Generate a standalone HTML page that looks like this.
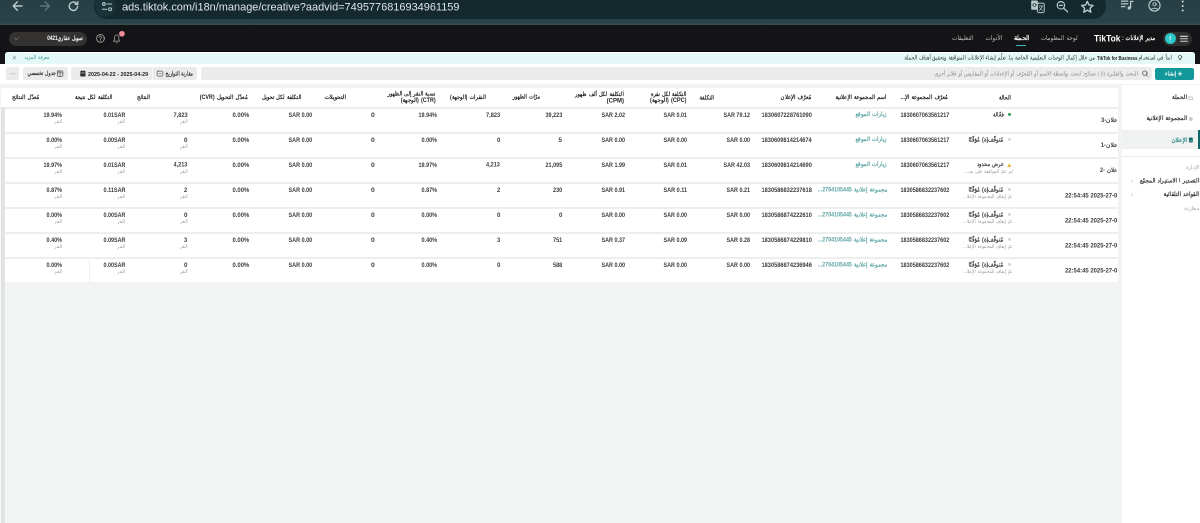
<!DOCTYPE html>
<html lang="ar"><head><meta charset="utf-8"><title>TikTok Ads Manager</title><style>
*{margin:0;padding:0;box-sizing:border-box}
html,body{width:1200px;height:523px;overflow:hidden}
body{position:relative;background:#f2f3f3;font-family:"Liberation Sans",sans-serif}
.abs,.b,.t,.dot{position:absolute;display:block}
.t{white-space:nowrap;line-height:20px;height:20px}
.dot{width:2.8px;height:2.8px;border-radius:50%}
.txt{position:absolute;left:0;top:0;width:2400px;height:1046px;transform:scale(0.5);transform-origin:0 0;will-change:transform}
.hl{position:absolute;left:1px;width:1116.5px;height:1.5px;background:#edefef}
</style></head><body>
<div class="b" style="left:0px;top:0px;width:1200px;height:25px;background:linear-gradient(#273f44 0,#28434a 22px,#2e474a 23.4px,#3f4b4b 24px,#3f4b4b 100%);"></div>
<div class="b" style="left:94px;top:-7px;width:1012px;height:26px;background:#14292e;border-radius:13px"></div>
<div class="b" style="left:95.2px;top:-3.6px;width:20.6px;height:20.6px;background:#1b3439;border-radius:50%"></div>
<div class="b" style="left:0px;top:25px;width:1200px;height:39px;background:linear-gradient(#0e1414 0,#101616 1.5px,#141416 3.5px,#141416 100%);"></div>
<div class="b" style="left:0px;top:51px;width:1200px;height:1px;background:#050505;"></div>
<div class="b" style="left:9.3px;top:31.8px;width:78.2px;height:14px;background:#343332;border-radius:7px"></div>
<div class="b" style="left:1163px;top:32px;width:28.5px;height:13.6px;background:#2f2f2f;border-radius:7px"></div>
<div class="b" style="left:1164.6px;top:33.2px;width:11.2px;height:11.2px;background:#2cc5c8;border-radius:50%"></div>
<div class="b" style="left:1016px;top:45.1px;width:10px;height:1.1px;background:#3fb8b8;"></div>
<div class="b" style="left:0px;top:64px;width:1200px;height:19.8px;background:#fff;"></div>
<div class="b" style="left:5px;top:52px;width:1190px;height:12.3px;background:#e4f8f7;border-radius:3px 3px 0 0;border-top:1.6px solid #fbffff"></div>
<div class="b" style="left:6.3px;top:67.4px;width:12.6px;height:12.6px;background:#ebebeb;border-radius:2px"></div>
<div class="b" style="left:22.8px;top:67.4px;width:45.2px;height:12.6px;background:#ebebeb;border-radius:2px"></div>
<div class="b" style="left:71.4px;top:67.4px;width:126px;height:12.6px;background:#ebebeb;border-radius:2px"></div>
<div class="b" style="left:152.1px;top:67.4px;width:0.9px;height:12.6px;background:#f7f7f7;"></div>
<div class="b" style="left:200.8px;top:67.4px;width:951px;height:12.6px;background:#ebebeb;border-radius:2px"></div>
<div class="b" style="left:1155px;top:67.6px;width:38.8px;height:12.6px;background:#12979a;border-radius:2px"></div>
<div class="b" style="left:1122px;top:84.7px;width:78px;height:440px;background:#fff;"></div>
<div class="b" style="left:1122px;top:130.2px;width:78px;height:19.2px;background:#f0f1f1;"></div>
<div class="b" style="left:1198.2px;top:130.2px;width:1.8px;height:19.2px;background:#0f6666;"></div>
<div class="b" style="left:1122px;top:155.6px;width:78px;height:0.9px;background:#ececec;"></div>
<div class="b" style="left:1px;top:87.8px;width:1116.5px;height:194.4px;background:#fff;border-radius:3px 1px 0 0"></div>
<div class="hl" style="top:107px"></div>
<div class="hl" style="top:132px"></div>
<div class="hl" style="top:157px"></div>
<div class="hl" style="top:182px"></div>
<div class="hl" style="top:207px"></div>
<div class="hl" style="top:232px"></div>
<div class="hl" style="top:257px"></div>
<div class="b" style="left:88.6px;top:258.5px;width:0.7px;height:23.7px;background:#f0f0f0;"></div>
<div class="b" style="left:0px;top:107.5px;width:1.3px;height:420px;background:#f6f7f7;"></div>
<div class="b" style="left:1.3px;top:107.4px;width:3.5px;height:420px;background:#e2e3e3;"></div>
<div class="b" style="left:4.8px;top:282.2px;width:2.2px;height:245px;background:#f5f6f6;"></div>
<svg class="abs" style="left:0;top:0" width="1200" height="25" viewBox="0 0 1200 25" fill="none" stroke-linecap="round" stroke-linejoin="round">
<g stroke="#b9cccc" stroke-width="1.4">
<path d="M22 6H13.4M17.4 1.8L13.2 6l4.2 4.2"/>
<path d="M77.6 6.3a4.2 4.2 0 1 1-1.3-3.1M77.8 1.6v2.6h-2.6"/>
</g>
<g stroke="#5a7679" stroke-width="1.4"><path d="M40.6 6h8.6M45.2 1.8L49.4 6l-4.2 4.2"/></g>
<g stroke="#b9cccc" stroke-width="1.1">
<circle cx="103.9" cy="4" r="1.4"/><path d="M107 4h4.6M102.4 9.2h4.4"/><circle cx="110.1" cy="9.2" r="1.5"/>
</g>
<g>
<rect x="1031.2" y="0.4" width="6.6" height="9.4" rx="0.8" fill="#bccccc"/>
<rect x="1037.4" y="3.2" width="6.8" height="9.4" rx="0.8" stroke="#bccccc" stroke-width="1"/>
<circle cx="1034.4" cy="5" r="1.6" stroke="#2b4549" stroke-width="0.9"/>
<path d="M1039 6h3.6M1039.4 10.6l3-4.4M1039.6 7.6l2.8 3" stroke="#bccccc" stroke-width="0.8"/>
</g>
<g stroke="#b9cccc" stroke-width="1.2">
<circle cx="1060.9" cy="5.3" r="3.7"/><path d="M1063.7 8.2l3.9 3.6M1059.3 5.3h3.2"/>
<path d="M1087.3 1.3l1.7 3.7 4 .4-3 2.8.8 4-3.5-2.1-3.5 2.1.8-4-3-2.8 4-.4z" stroke-width="1.4"/>
<path d="M1121.4 1.2h6.4M1121.4 3.9h6.4M1121.4 6.6h3.6"/>
<path d="M1130.6 1.4v6.2M1130.6 1.4h2.4" stroke-width="1.3"/>
<circle cx="1154.5" cy="5.5" r="5.6"/>
<circle cx="1154.5" cy="4.2" r="1.7" stroke-width="1"/>
<path d="M1150.8 9.4c1-1.6 6.4-1.6 7.4 0" stroke-width="1"/>
</g>
<circle cx="1129.2" cy="8" r="1.7" fill="#b9cccc"/>
<g fill="#d3e0e0"><circle cx="1182.7" cy="1.6" r="1"/><circle cx="1182.7" cy="6" r="1"/><circle cx="1182.7" cy="10.4" r="1"/></g>
</svg>
<svg class="abs" style="left:0;top:25px" width="1200" height="60" viewBox="0 25 1200 60" fill="none" stroke-linecap="round" stroke-linejoin="round">
<path d="M14.4 37.9l1.9 1.9 1.9-1.9" stroke="#8a8a8a" stroke-width="0.8"/>
<circle cx="100.4" cy="38.4" r="3.9" stroke="#c2c2c2" stroke-width="0.8"/>
<path d="M99.2 37.3c0-1.6 2.4-1.6 2.4 0 0 .9-1.2 1-1.2 2.1" stroke="#c2c2c2" stroke-width="0.8"/><circle cx="100.4" cy="40.7" r="0.45" fill="#c2c2c2"/>
<path d="M113.6 41.2h6.2l-.9-1.3v-2.7a2.2 2.2 0 0 0-4.4 0v2.7z" stroke="#a4a4a4" stroke-width="0.8"/><path d="M115.9 42.6c.4.6 1.2.6 1.6 0" stroke="#a4a4a4" stroke-width="0.8"/>
<circle cx="121.9" cy="33.8" r="2.8" fill="#f28c98"/>
<path d="M1180.6 36.4h6.8M1180.6 38.8h6.8M1180.6 41.2h6.8" stroke="#d0d0d0" stroke-width="1.1"/>
<path d="M1170.2 36.2v3.2" stroke="#fff" stroke-width="0.9"/><circle cx="1170.2" cy="41.2" r="0.5" fill="#fff"/>
<path d="M12.9 56.3l3 3M15.9 56.3l-3 3" stroke="#666" stroke-width="0.6"/>
<circle cx="1180" cy="57" r="1.7" stroke="#555" stroke-width="0.7"/><path d="M1179.2 59.6h1.6" stroke="#555" stroke-width="0.7"/>
<g fill="#9a9a9a"><circle cx="10.8" cy="73.7" r="0.55"/><circle cx="12.6" cy="73.7" r="0.55"/><circle cx="14.4" cy="73.7" r="0.55"/></g>
<rect x="57.4" y="71" width="5.4" height="5.4" rx="0.6" stroke="#444" stroke-width="0.7"/><path d="M60.1 71v5.4M57.4 72.8h5.4" stroke="#444" stroke-width="0.6"/>
<rect x="80.2" y="71" width="5.4" height="5.6" rx="0.8" fill="#333"/><path d="M80.6 72.9h4.6" stroke="#ebebeb" stroke-width="0.5"/><path d="M81.6 70.4v1.2M84.2 70.4v1.2" stroke="#333" stroke-width="0.7"/>
<rect x="157.2" y="71.2" width="5.6" height="5" rx="0.8" stroke="#555" stroke-width="0.7"/><path d="M159 73.7h2.2" stroke="#555" stroke-width="0.6"/>
<circle cx="1144.8" cy="73.2" r="2.3" stroke="#555" stroke-width="0.8"/><path d="M1146.5 75l1.5 1.5" stroke="#555" stroke-width="0.8"/>
<path d="M1178.2 73.8h3.6M1180 72v3.6" stroke="#fff" stroke-width="0.9"/>
</svg>
<svg class="abs" style="left:1122px;top:85px" width="78" height="130" viewBox="1122 85 78 130" fill="none" stroke-linecap="round" stroke-linejoin="round">
<path d="M1189.2 96.6h1.4l.5.6h1.5v2.4h-3.4z" stroke="#b5b5b5" stroke-width="0.7"/>
<rect x="1189" y="117.2" width="3.6" height="3.6" rx="0.6" fill="#c9c9c9"/>
<rect x="1188.9" y="137.4" width="3.9" height="5" rx="0.9" fill="#156d6d"/><path d="M1190 140.9h1.7" stroke="#e8f3f3" stroke-width="0.5"/>
<path d="M1132.6 179.8l-1.2 1.2 1.2 1.2M1132.6 193.3l-1.2 1.2 1.2 1.2" stroke="#b0b0b0" stroke-width="0.6"/>
</svg>

<i class="dot" style="left:1008px;top:113.4px;background:#2e9e4f"></i>
<i class="dot" style="left:1008px;top:138.4px;background:#d4d4d4"></i>
<svg class="abs" style="left:1007.2px;top:162.5px" width="4.6" height="4.4" viewBox="0 0 10 9"><path d="M5 0 L10 9 L0 9 Z" fill="#e9b93a"/></svg>
<i class="dot" style="left:1008px;top:188.4px;background:#d4d4d4"></i>
<i class="dot" style="left:1008px;top:213.4px;background:#d4d4d4"></i>
<i class="dot" style="left:1008px;top:238.4px;background:#d4d4d4"></i>
<i class="dot" style="left:1008px;top:263.4px;background:#d4d4d4"></i>
<div class="txt">
<span class="t" style="top:2.6px;font-size:22.8px;color:#dfe7e7;left:244.0px;direction:ltr;transform-origin:0 50%;transform:scaleX(0.961);">ads.tiktok.com/i18n/manage/creative?aadvid=7495776816934961159</span>
<span class="t" style="top:65.7px;font-size:12px;color:#fff;font-weight:700;right:2234.2px;direction:rtl;word-spacing:.12em;transform-origin:100% 50%;transform:scaleX(0.776);">تمويل عقاري0421</span>
<span class="t" style="top:66.1px;font-size:13.2px;color:#bdbdbd;right:453.0px;direction:rtl;word-spacing:.12em;transform-origin:100% 50%;transform:scaleX(0.872);">التعليقات</span>
<span class="t" style="top:66.4px;font-size:13.2px;color:#bdbdbd;right:395.0px;direction:rtl;word-spacing:.12em;transform-origin:100% 50%;transform:scaleX(0.876);">الأدوات</span>
<span class="t" style="top:66.3px;font-size:13.2px;color:#fff;font-weight:700;right:341.5px;direction:rtl;word-spacing:.12em;transform-origin:100% 50%;transform:scaleX(0.896);">الحملة</span>
<span class="t" style="top:65.5px;font-size:13.2px;color:#bdbdbd;right:245.0px;direction:rtl;word-spacing:.12em;transform-origin:100% 50%;transform:scaleX(0.842);">لوحة المعلومات</span>
<span class="t" style="top:67.1px;font-size:18px;color:#fff;font-weight:700;left:2188.0px;direction:ltr;transform-origin:0 50%;transform:scaleX(0.940);">TikTok</span>
<span class="t" style="top:66.1px;font-size:12.8px;color:#fff;font-weight:700;right:90.0px;direction:rtl;word-spacing:.12em;transform-origin:100% 50%;transform:scaleX(0.765);">مدير الإعلانات :</span>
<span class="t" style="top:104.6px;font-size:11.6px;color:#2b2b2b;right:56.4px;direction:rtl;word-spacing:.12em;transform-origin:100% 50%;transform:scaleX(0.819);">ابدأ في استخدام</span>
<span class="t" style="top:105.6px;font-size:10.8px;color:#222;font-weight:700;left:2193.6px;direction:ltr;transform-origin:0 50%;transform:scaleX(0.792);">TikTok for Business</span>
<span class="t" style="top:104.8px;font-size:11.6px;color:#2b2b2b;right:210.2px;direction:rtl;word-spacing:.12em;transform-origin:100% 50%;transform:scaleX(0.772);">من خلال إكمال الوحدات التعليمية الخاصة بنا. تعلّم إنشاء الإعلانات المتوافقة وتحقيق أهداف الحملة.</span>
<span class="t" style="top:104.4px;font-size:11.2px;color:#3f9c9c;right:2301.0px;direction:rtl;word-spacing:.12em;transform-origin:100% 50%;transform:scaleX(0.854);">معرفة المزيد</span>
<span class="t" style="top:136.2px;font-size:11.6px;color:#333;font-weight:700;right:2288.4px;direction:rtl;word-spacing:.12em;transform-origin:100% 50%;transform:scaleX(0.772);">جدول تخصصي</span>
<span class="t" style="top:138.1px;font-size:11.6px;color:#222;font-weight:700;left:176.0px;direction:ltr;transform-origin:0 50%;transform:scaleX(0.933);">2025-04-22 - 2025-04-29</span>
<span class="t" style="top:136.7px;font-size:11.6px;color:#333;font-weight:700;right:2014.0px;direction:rtl;word-spacing:.12em;transform-origin:100% 50%;transform:scaleX(0.748);">مقارنة التواريخ</span>
<span class="t" style="top:137.0px;font-size:11.6px;color:#8a8a8a;right:124.0px;direction:rtl;word-spacing:.12em;transform-origin:100% 50%;transform:scaleX(0.819);">البحث والفلترة (/) | نصائح: ابحث بواسطة الاسم أو المُعرّف أو الإعدادات أو المقاييس أو فلاتر أخرى</span>
<span class="t" style="top:137.3px;font-size:11.6px;color:#fff;font-weight:700;right:48.0px;direction:rtl;word-spacing:.12em;transform-origin:100% 50%;transform:scaleX(0.830);">إنشاء</span>
<span class="t" style="top:184.4px;font-size:12.4px;color:#333;font-weight:700;right:26.0px;direction:rtl;word-spacing:.12em;transform-origin:100% 50%;transform:scaleX(0.935);">الحملة</span>
<span class="t" style="top:226.4px;font-size:12.4px;color:#333;font-weight:700;right:26.0px;direction:rtl;word-spacing:.12em;transform-origin:100% 50%;transform:scaleX(0.899);">المجموعة الإعلانية</span>
<span class="t" style="top:269.7px;font-size:12.4px;color:#2a8585;font-weight:700;right:26.0px;direction:rtl;word-spacing:.12em;transform-origin:100% 50%;transform:scaleX(0.938);">الإعلان</span>
<span class="t" style="top:323.6px;font-size:11.2px;color:#a9a9a9;right:1.0px;direction:rtl;word-spacing:.12em;transform-origin:100% 50%;transform:scaleX(0.981);">الإدارة</span>
<span class="t" style="top:350.6px;font-size:12.4px;color:#333;font-weight:700;right:2.0px;direction:rtl;word-spacing:.12em;transform-origin:100% 50%;transform:scaleX(0.890);">التصدير \ الاستيراد المجمّع</span>
<span class="t" style="top:378.1px;font-size:12.4px;color:#333;font-weight:700;right:2.0px;direction:rtl;word-spacing:.12em;transform-origin:100% 50%;transform:scaleX(0.909);">القواعد التلقائية</span>
<span class="t" style="top:405.9px;font-size:11.2px;color:#a9a9a9;right:1.0px;direction:rtl;word-spacing:.12em;transform-origin:100% 50%;transform:scaleX(1.055);">مقارنة</span>
<span class="t" style="top:184.8px;font-size:12px;color:#1f1f1f;font-weight:700;right:378.4px;direction:rtl;word-spacing:.12em;transform-origin:100% 50%;transform:scaleX(0.843);">الحالة</span>
<span class="t" style="top:183.7px;font-size:12px;color:#1f1f1f;font-weight:700;right:504.0px;direction:rtl;word-spacing:.12em;transform-origin:100% 50%;transform:scaleX(0.870);">مُعرّف المجموعة الإ...</span>
<span class="t" style="top:183.8px;font-size:12px;color:#1f1f1f;font-weight:700;right:627.5px;direction:rtl;word-spacing:.12em;transform-origin:100% 50%;transform:scaleX(0.881);">اسم المجموعة الإعلانية</span>
<span class="t" style="top:184.0px;font-size:12px;color:#1f1f1f;font-weight:700;right:777.5px;direction:rtl;word-spacing:.12em;transform-origin:100% 50%;transform:scaleX(0.891);">مُعرّف الإعلان</span>
<span class="t" style="top:184.6px;font-size:12px;color:#1f1f1f;font-weight:700;right:971.6px;direction:rtl;word-spacing:.12em;transform-origin:100% 50%;transform:scaleX(0.861);">التكلفة</span>
<span class="t" style="top:178.0px;font-size:12px;color:#1f1f1f;font-weight:700;right:1027.0px;direction:rtl;word-spacing:.12em;transform-origin:100% 50%;transform:scaleX(0.828);">التكلفة لكل نقرة</span>
<span class="t" style="top:189.7px;font-size:12px;color:#1f1f1f;font-weight:700;right:1027.0px;direction:rtl;word-spacing:.12em;transform-origin:100% 50%;transform:scaleX(0.935);">(CPC) (الوجهة)</span>
<span class="t" style="top:177.8px;font-size:12px;color:#1f1f1f;font-weight:700;right:1152.5px;direction:rtl;word-spacing:.12em;transform-origin:100% 50%;transform:scaleX(0.841);">التكلفة لكل ألف ظهور</span>
<span class="t" style="top:190.7px;font-size:12px;color:#1f1f1f;font-weight:700;right:1152.0px;direction:rtl;word-spacing:.12em;transform-origin:100% 50%;">(CPM)</span>
<span class="t" style="top:183.3px;font-size:12px;color:#1f1f1f;font-weight:700;right:1320.0px;direction:rtl;word-spacing:.12em;transform-origin:100% 50%;transform:scaleX(0.824);">مرّات الظهور</span>
<span class="t" style="top:183.7px;font-size:12px;color:#1f1f1f;font-weight:700;right:1428.4px;direction:rtl;word-spacing:.12em;transform-origin:100% 50%;transform:scaleX(0.866);">النقرات (الوجهة)</span>
<span class="t" style="top:177.2px;font-size:12px;color:#1f1f1f;font-weight:700;right:1529.4px;direction:rtl;word-spacing:.12em;transform-origin:100% 50%;transform:scaleX(0.831);">نسبة النقر إلى الظهور</span>
<span class="t" style="top:189.7px;font-size:12px;color:#1f1f1f;font-weight:700;right:1528.4px;direction:rtl;word-spacing:.12em;transform-origin:100% 50%;transform:scaleX(0.904);">(CTR) (الوجهة)</span>
<span class="t" style="top:183.8px;font-size:12px;color:#1f1f1f;font-weight:700;right:1708.0px;direction:rtl;word-spacing:.12em;transform-origin:100% 50%;transform:scaleX(0.933);">التحويلات</span>
<span class="t" style="top:184.0px;font-size:12px;color:#1f1f1f;font-weight:700;right:1797.5px;direction:rtl;word-spacing:.12em;transform-origin:100% 50%;transform:scaleX(0.852);">التكلفة لكل تحويل</span>
<span class="t" style="top:184.3px;font-size:12px;color:#1f1f1f;font-weight:700;right:1905.5px;direction:rtl;word-spacing:.12em;transform-origin:100% 50%;transform:scaleX(0.892);">مُعدّل التحويل (CVR)</span>
<span class="t" style="top:184.1px;font-size:12px;color:#1f1f1f;font-weight:700;right:2100.0px;direction:rtl;word-spacing:.12em;transform-origin:100% 50%;transform:scaleX(0.880);">النتائج</span>
<span class="t" style="top:184.2px;font-size:12px;color:#1f1f1f;font-weight:700;right:2175.0px;direction:rtl;word-spacing:.12em;transform-origin:100% 50%;transform:scaleX(0.846);">التكلفة لكل نتيجة</span>
<span class="t" style="top:184.2px;font-size:12px;color:#1f1f1f;font-weight:700;right:2321.1px;direction:rtl;word-spacing:.12em;transform-origin:100% 50%;transform:scaleX(0.893);">مُعدّل النتائج</span>
<span class="t" style="top:230.1px;font-size:12px;color:#3c3c3c;font-weight:700;right:165.0px;direction:rtl;word-spacing:.12em;transform-origin:100% 50%;transform:scaleX(0.970);">علان-3</span>
<span class="t" style="top:219.2px;font-size:12px;color:#3c3c3c;font-weight:700;right:392.5px;direction:rtl;word-spacing:.12em;transform-origin:100% 50%;transform:scaleX(0.860);">فعّالة</span>
<span class="t" style="top:219.7px;font-size:12px;color:#3c3c3c;font-weight:700;left:1801.0px;direction:ltr;transform-origin:0 50%;transform:scaleX(0.914);">1830607063561217</span>
<span class="t" style="top:217.7px;font-size:12px;color:#5aa3a3;font-weight:700;right:626.0px;direction:rtl;word-spacing:.12em;transform-origin:100% 50%;transform:scaleX(0.899);">زيارات الموقع</span>
<span class="t" style="top:219.7px;font-size:12px;color:#3c3c3c;font-weight:700;left:1523.0px;direction:ltr;transform-origin:0 50%;transform:scaleX(0.943);">1830607228761090</span>
<span class="t" style="top:219.7px;font-size:12px;color:#3c3c3c;font-weight:700;left:1446.7px;direction:ltr;transform-origin:0 50%;transform:scaleX(0.902);">SAR 79.12</span>
<span class="t" style="top:219.6px;font-size:12px;color:#3c3c3c;font-weight:700;left:1326.9px;direction:ltr;transform-origin:0 50%;transform:scaleX(0.906);">SAR 0.01</span>
<span class="t" style="top:219.6px;font-size:12px;color:#3c3c3c;font-weight:700;left:1202.9px;direction:ltr;transform-origin:0 50%;transform:scaleX(0.906);">SAR 2.02</span>
<span class="t" style="top:219.5px;font-size:12px;color:#3c3c3c;font-weight:700;left:1091.1px;direction:ltr;transform-origin:0 50%;transform:scaleX(0.914);">39,223</span>
<span class="t" style="top:219.6px;font-size:12px;color:#3c3c3c;font-weight:700;left:972.3px;direction:ltr;transform-origin:0 50%;transform:scaleX(0.940);">7,823</span>
<span class="t" style="top:219.6px;font-size:12px;color:#3c3c3c;font-weight:700;left:836.7px;direction:ltr;transform-origin:0 50%;transform:scaleX(0.908);">19.94%</span>
<span class="t" style="top:219.8px;font-size:12px;color:#3c3c3c;font-weight:700;left:741.8px;direction:ltr;transform-origin:0 50%;transform:scaleX(1.134);">0</span>
<span class="t" style="top:219.7px;font-size:12px;color:#3c3c3c;font-weight:700;left:576.5px;direction:ltr;transform-origin:0 50%;transform:scaleX(0.912);">SAR 0.00</span>
<span class="t" style="top:219.7px;font-size:12px;color:#3c3c3c;font-weight:700;left:465.0px;direction:ltr;transform-origin:0 50%;transform:scaleX(0.982);">0.00%</span>
<span class="t" style="top:219.6px;font-size:12px;color:#3c3c3c;font-weight:700;left:346.8px;direction:ltr;transform-origin:0 50%;transform:scaleX(0.940);">7,823</span>
<span class="t" style="top:232.6px;font-size:10px;color:#9a9a9a;right:2025.5px;direction:rtl;word-spacing:.12em;transform-origin:100% 50%;transform:scaleX(0.729);">النقر</span>
<span class="t" style="top:219.6px;font-size:12px;color:#3c3c3c;font-weight:700;left:206.5px;direction:ltr;transform-origin:0 50%;transform:scaleX(0.898);">0.01SAR</span>
<span class="t" style="top:232.6px;font-size:10px;color:#9a9a9a;right:2150.0px;direction:rtl;word-spacing:.12em;transform-origin:100% 50%;transform:scaleX(0.729);">النقر</span>
<span class="t" style="top:219.6px;font-size:12px;color:#3c3c3c;font-weight:700;left:86.7px;direction:ltr;transform-origin:0 50%;transform:scaleX(0.908);">19.94%</span>
<span class="t" style="top:232.6px;font-size:10px;color:#9a9a9a;right:2276.0px;direction:rtl;word-spacing:.12em;transform-origin:100% 50%;transform:scaleX(0.729);">النقر</span>
<span class="t" style="top:279.9px;font-size:12px;color:#3c3c3c;font-weight:700;right:165.5px;direction:rtl;word-spacing:.12em;transform-origin:100% 50%;transform:scaleX(0.985);">علان-1</span>
<span class="t" style="top:268.8px;font-size:12px;color:#3c3c3c;font-weight:700;right:393.0px;direction:rtl;word-spacing:.12em;transform-origin:100% 50%;transform:scaleX(0.892);">مُتوقّف(ة) مُؤقّتًا</span>
<span class="t" style="top:269.7px;font-size:12px;color:#3c3c3c;font-weight:700;left:1801.0px;direction:ltr;transform-origin:0 50%;transform:scaleX(0.914);">1830607063561217</span>
<span class="t" style="top:267.7px;font-size:12px;color:#5aa3a3;font-weight:700;right:626.0px;direction:rtl;word-spacing:.12em;transform-origin:100% 50%;transform:scaleX(0.899);">زيارات الموقع</span>
<span class="t" style="top:269.6px;font-size:12px;color:#3c3c3c;font-weight:700;left:1523.0px;direction:ltr;transform-origin:0 50%;transform:scaleX(0.939);">1830609814214674</span>
<span class="t" style="top:269.7px;font-size:12px;color:#3c3c3c;font-weight:700;left:1452.9px;direction:ltr;transform-origin:0 50%;transform:scaleX(0.906);">SAR 0.00</span>
<span class="t" style="top:269.7px;font-size:12px;color:#3c3c3c;font-weight:700;left:1326.9px;direction:ltr;transform-origin:0 50%;transform:scaleX(0.906);">SAR 0.00</span>
<span class="t" style="top:269.7px;font-size:12px;color:#3c3c3c;font-weight:700;left:1202.9px;direction:ltr;transform-origin:0 50%;transform:scaleX(0.906);">SAR 0.00</span>
<span class="t" style="top:269.7px;font-size:12px;color:#3c3c3c;font-weight:700;left:1117.3px;direction:ltr;transform-origin:0 50%;transform:scaleX(1.038);">5</span>
<span class="t" style="top:269.8px;font-size:12px;color:#3c3c3c;font-weight:700;left:993.8px;direction:ltr;transform-origin:0 50%;transform:scaleX(1.030);">0</span>
<span class="t" style="top:269.7px;font-size:12px;color:#3c3c3c;font-weight:700;left:842.9px;direction:ltr;transform-origin:0 50%;transform:scaleX(0.915);">0.00%</span>
<span class="t" style="top:269.8px;font-size:12px;color:#3c3c3c;font-weight:700;left:741.8px;direction:ltr;transform-origin:0 50%;transform:scaleX(1.134);">0</span>
<span class="t" style="top:269.7px;font-size:12px;color:#3c3c3c;font-weight:700;left:576.5px;direction:ltr;transform-origin:0 50%;transform:scaleX(0.912);">SAR 0.00</span>
<span class="t" style="top:269.7px;font-size:12px;color:#3c3c3c;font-weight:700;left:465.0px;direction:ltr;transform-origin:0 50%;transform:scaleX(0.982);">0.00%</span>
<span class="t" style="top:269.8px;font-size:12px;color:#3c3c3c;font-weight:700;left:368.3px;direction:ltr;transform-origin:0 50%;transform:scaleX(1.030);">0</span>
<span class="t" style="top:282.6px;font-size:10px;color:#9a9a9a;right:2025.5px;direction:rtl;word-spacing:.12em;transform-origin:100% 50%;transform:scaleX(0.729);">النقر</span>
<span class="t" style="top:269.7px;font-size:12px;color:#3c3c3c;font-weight:700;left:206.5px;direction:ltr;transform-origin:0 50%;transform:scaleX(0.898);">0.00SAR</span>
<span class="t" style="top:282.6px;font-size:10px;color:#9a9a9a;right:2150.0px;direction:rtl;word-spacing:.12em;transform-origin:100% 50%;transform:scaleX(0.729);">النقر</span>
<span class="t" style="top:269.7px;font-size:12px;color:#3c3c3c;font-weight:700;left:92.9px;direction:ltr;transform-origin:0 50%;transform:scaleX(0.915);">0.00%</span>
<span class="t" style="top:282.6px;font-size:10px;color:#9a9a9a;right:2276.0px;direction:rtl;word-spacing:.12em;transform-origin:100% 50%;transform:scaleX(0.729);">النقر</span>
<span class="t" style="top:330.1px;font-size:12px;color:#3c3c3c;font-weight:700;right:165.5px;direction:rtl;word-spacing:.12em;transform-origin:100% 50%;transform:scaleX(0.895);">علان -2</span>
<span class="t" style="top:317.6px;font-size:12px;color:#3c3c3c;font-weight:700;right:392.5px;direction:rtl;word-spacing:.12em;transform-origin:100% 50%;transform:scaleX(0.828);">عرض محدود</span>
<span class="t" style="top:333.0px;font-size:10.4px;color:#9a9a9a;right:375.0px;direction:rtl;word-spacing:.12em;transform-origin:100% 50%;transform:scaleX(0.859);">لم تتمّ الموافقة على بعـ...</span>
<span class="t" style="top:319.7px;font-size:12px;color:#3c3c3c;font-weight:700;left:1801.0px;direction:ltr;transform-origin:0 50%;transform:scaleX(0.914);">1830607063561217</span>
<span class="t" style="top:317.7px;font-size:12px;color:#5aa3a3;font-weight:700;right:626.0px;direction:rtl;word-spacing:.12em;transform-origin:100% 50%;transform:scaleX(0.899);">زيارات الموقع</span>
<span class="t" style="top:319.6px;font-size:12px;color:#3c3c3c;font-weight:700;left:1523.0px;direction:ltr;transform-origin:0 50%;transform:scaleX(0.943);">1830609814214690</span>
<span class="t" style="top:319.6px;font-size:12px;color:#3c3c3c;font-weight:700;left:1446.7px;direction:ltr;transform-origin:0 50%;transform:scaleX(0.902);">SAR 42.03</span>
<span class="t" style="top:319.6px;font-size:12px;color:#3c3c3c;font-weight:700;left:1326.9px;direction:ltr;transform-origin:0 50%;transform:scaleX(0.906);">SAR 0.01</span>
<span class="t" style="top:319.7px;font-size:12px;color:#3c3c3c;font-weight:700;left:1202.9px;direction:ltr;transform-origin:0 50%;transform:scaleX(0.906);">SAR 1.99</span>
<span class="t" style="top:319.5px;font-size:12px;color:#3c3c3c;font-weight:700;left:1091.1px;direction:ltr;transform-origin:0 50%;transform:scaleX(0.914);">21,095</span>
<span class="t" style="top:319.3px;font-size:12px;color:#3c3c3c;font-weight:700;left:972.3px;direction:ltr;transform-origin:0 50%;transform:scaleX(0.923);">4,213</span>
<span class="t" style="top:319.8px;font-size:12px;color:#3c3c3c;font-weight:700;left:836.7px;direction:ltr;transform-origin:0 50%;transform:scaleX(0.908);">19.97%</span>
<span class="t" style="top:319.8px;font-size:12px;color:#3c3c3c;font-weight:700;left:741.8px;direction:ltr;transform-origin:0 50%;transform:scaleX(1.134);">0</span>
<span class="t" style="top:319.7px;font-size:12px;color:#3c3c3c;font-weight:700;left:576.5px;direction:ltr;transform-origin:0 50%;transform:scaleX(0.912);">SAR 0.00</span>
<span class="t" style="top:319.7px;font-size:12px;color:#3c3c3c;font-weight:700;left:465.0px;direction:ltr;transform-origin:0 50%;transform:scaleX(0.982);">0.00%</span>
<span class="t" style="top:319.3px;font-size:12px;color:#3c3c3c;font-weight:700;left:346.8px;direction:ltr;transform-origin:0 50%;transform:scaleX(0.923);">4,213</span>
<span class="t" style="top:332.6px;font-size:10px;color:#9a9a9a;right:2025.5px;direction:rtl;word-spacing:.12em;transform-origin:100% 50%;transform:scaleX(0.729);">النقر</span>
<span class="t" style="top:319.6px;font-size:12px;color:#3c3c3c;font-weight:700;left:206.5px;direction:ltr;transform-origin:0 50%;transform:scaleX(0.898);">0.01SAR</span>
<span class="t" style="top:332.6px;font-size:10px;color:#9a9a9a;right:2150.0px;direction:rtl;word-spacing:.12em;transform-origin:100% 50%;transform:scaleX(0.729);">النقر</span>
<span class="t" style="top:319.8px;font-size:12px;color:#3c3c3c;font-weight:700;left:86.7px;direction:ltr;transform-origin:0 50%;transform:scaleX(0.908);">19.97%</span>
<span class="t" style="top:332.6px;font-size:10px;color:#9a9a9a;right:2276.0px;direction:rtl;word-spacing:.12em;transform-origin:100% 50%;transform:scaleX(0.729);">النقر</span>
<span class="t" style="top:381.0px;font-size:12px;color:#3c3c3c;font-weight:700;left:2130.0px;direction:ltr;transform-origin:0 50%;transform:scaleX(0.986);">22:54:45 2025-27-0</span>
<span class="t" style="top:368.8px;font-size:12px;color:#3c3c3c;font-weight:700;right:393.0px;direction:rtl;word-spacing:.12em;transform-origin:100% 50%;transform:scaleX(0.892);">مُتوقّف(ة) مُؤقّتًا</span>
<span class="t" style="top:382.5px;font-size:10.4px;color:#9a9a9a;right:376.0px;direction:rtl;word-spacing:.12em;transform-origin:100% 50%;transform:scaleX(0.839);">تمّ إيقاف المجموعة الإعلا...</span>
<span class="t" style="top:369.7px;font-size:12px;color:#3c3c3c;font-weight:700;left:1801.0px;direction:ltr;transform-origin:0 50%;transform:scaleX(0.914);">1830586832237602</span>
<span class="t" style="top:368.8px;font-size:12px;color:#5aa3a3;font-weight:700;right:626.0px;direction:rtl;word-spacing:.12em;transform-origin:100% 50%;transform:scaleX(0.887);">مجموعة إعلانية 2704105445...</span>
<span class="t" style="top:369.7px;font-size:12px;color:#3c3c3c;font-weight:700;left:1523.0px;direction:ltr;transform-origin:0 50%;transform:scaleX(0.943);">1830586832237618</span>
<span class="t" style="top:369.6px;font-size:12px;color:#3c3c3c;font-weight:700;left:1452.9px;direction:ltr;transform-origin:0 50%;transform:scaleX(0.906);">SAR 0.21</span>
<span class="t" style="top:369.6px;font-size:12px;color:#3c3c3c;font-weight:700;left:1326.9px;direction:ltr;transform-origin:0 50%;transform:scaleX(0.915);">SAR 0.11</span>
<span class="t" style="top:369.6px;font-size:12px;color:#3c3c3c;font-weight:700;left:1202.9px;direction:ltr;transform-origin:0 50%;transform:scaleX(0.906);">SAR 0.91</span>
<span class="t" style="top:369.6px;font-size:12px;color:#3c3c3c;font-weight:700;left:1105.5px;direction:ltr;transform-origin:0 50%;transform:scaleX(0.925);">230</span>
<span class="t" style="top:369.5px;font-size:12px;color:#3c3c3c;font-weight:700;left:993.8px;direction:ltr;transform-origin:0 50%;transform:scaleX(0.951);">2</span>
<span class="t" style="top:369.8px;font-size:12px;color:#3c3c3c;font-weight:700;left:842.9px;direction:ltr;transform-origin:0 50%;transform:scaleX(0.915);">0.87%</span>
<span class="t" style="top:369.8px;font-size:12px;color:#3c3c3c;font-weight:700;left:741.8px;direction:ltr;transform-origin:0 50%;transform:scaleX(1.134);">0</span>
<span class="t" style="top:369.7px;font-size:12px;color:#3c3c3c;font-weight:700;left:576.5px;direction:ltr;transform-origin:0 50%;transform:scaleX(0.912);">SAR 0.00</span>
<span class="t" style="top:369.7px;font-size:12px;color:#3c3c3c;font-weight:700;left:465.0px;direction:ltr;transform-origin:0 50%;transform:scaleX(0.982);">0.00%</span>
<span class="t" style="top:369.5px;font-size:12px;color:#3c3c3c;font-weight:700;left:368.3px;direction:ltr;transform-origin:0 50%;transform:scaleX(0.951);">2</span>
<span class="t" style="top:382.6px;font-size:10px;color:#9a9a9a;right:2025.5px;direction:rtl;word-spacing:.12em;transform-origin:100% 50%;transform:scaleX(0.729);">النقر</span>
<span class="t" style="top:369.6px;font-size:12px;color:#3c3c3c;font-weight:700;left:206.5px;direction:ltr;transform-origin:0 50%;transform:scaleX(0.917);">0.11SAR</span>
<span class="t" style="top:382.6px;font-size:10px;color:#9a9a9a;right:2150.0px;direction:rtl;word-spacing:.12em;transform-origin:100% 50%;transform:scaleX(0.729);">النقر</span>
<span class="t" style="top:369.8px;font-size:12px;color:#3c3c3c;font-weight:700;left:92.9px;direction:ltr;transform-origin:0 50%;transform:scaleX(0.915);">0.87%</span>
<span class="t" style="top:382.6px;font-size:10px;color:#9a9a9a;right:2276.0px;direction:rtl;word-spacing:.12em;transform-origin:100% 50%;transform:scaleX(0.729);">النقر</span>
<span class="t" style="top:431.0px;font-size:12px;color:#3c3c3c;font-weight:700;left:2130.0px;direction:ltr;transform-origin:0 50%;transform:scaleX(0.986);">22:54:45 2025-27-0</span>
<span class="t" style="top:418.8px;font-size:12px;color:#3c3c3c;font-weight:700;right:393.0px;direction:rtl;word-spacing:.12em;transform-origin:100% 50%;transform:scaleX(0.892);">مُتوقّف(ة) مُؤقّتًا</span>
<span class="t" style="top:432.5px;font-size:10.4px;color:#9a9a9a;right:376.0px;direction:rtl;word-spacing:.12em;transform-origin:100% 50%;transform:scaleX(0.839);">تمّ إيقاف المجموعة الإعلا...</span>
<span class="t" style="top:419.7px;font-size:12px;color:#3c3c3c;font-weight:700;left:1801.0px;direction:ltr;transform-origin:0 50%;transform:scaleX(0.914);">1830586832237602</span>
<span class="t" style="top:418.8px;font-size:12px;color:#5aa3a3;font-weight:700;right:626.0px;direction:rtl;word-spacing:.12em;transform-origin:100% 50%;transform:scaleX(0.887);">مجموعة إعلانية 2704105445...</span>
<span class="t" style="top:419.6px;font-size:12px;color:#3c3c3c;font-weight:700;left:1523.0px;direction:ltr;transform-origin:0 50%;transform:scaleX(0.943);">1830586874222610</span>
<span class="t" style="top:419.7px;font-size:12px;color:#3c3c3c;font-weight:700;left:1452.9px;direction:ltr;transform-origin:0 50%;transform:scaleX(0.906);">SAR 0.00</span>
<span class="t" style="top:419.7px;font-size:12px;color:#3c3c3c;font-weight:700;left:1326.9px;direction:ltr;transform-origin:0 50%;transform:scaleX(0.906);">SAR 0.00</span>
<span class="t" style="top:419.7px;font-size:12px;color:#3c3c3c;font-weight:700;left:1202.9px;direction:ltr;transform-origin:0 50%;transform:scaleX(0.906);">SAR 0.00</span>
<span class="t" style="top:419.8px;font-size:12px;color:#3c3c3c;font-weight:700;left:1117.8px;direction:ltr;transform-origin:0 50%;transform:scaleX(1.030);">0</span>
<span class="t" style="top:419.8px;font-size:12px;color:#3c3c3c;font-weight:700;left:993.8px;direction:ltr;transform-origin:0 50%;transform:scaleX(1.030);">0</span>
<span class="t" style="top:419.7px;font-size:12px;color:#3c3c3c;font-weight:700;left:842.9px;direction:ltr;transform-origin:0 50%;transform:scaleX(0.915);">0.00%</span>
<span class="t" style="top:419.8px;font-size:12px;color:#3c3c3c;font-weight:700;left:741.8px;direction:ltr;transform-origin:0 50%;transform:scaleX(1.134);">0</span>
<span class="t" style="top:419.7px;font-size:12px;color:#3c3c3c;font-weight:700;left:576.5px;direction:ltr;transform-origin:0 50%;transform:scaleX(0.912);">SAR 0.00</span>
<span class="t" style="top:419.7px;font-size:12px;color:#3c3c3c;font-weight:700;left:465.0px;direction:ltr;transform-origin:0 50%;transform:scaleX(0.982);">0.00%</span>
<span class="t" style="top:419.8px;font-size:12px;color:#3c3c3c;font-weight:700;left:368.3px;direction:ltr;transform-origin:0 50%;transform:scaleX(1.030);">0</span>
<span class="t" style="top:432.6px;font-size:10px;color:#9a9a9a;right:2025.5px;direction:rtl;word-spacing:.12em;transform-origin:100% 50%;transform:scaleX(0.729);">النقر</span>
<span class="t" style="top:419.7px;font-size:12px;color:#3c3c3c;font-weight:700;left:206.5px;direction:ltr;transform-origin:0 50%;transform:scaleX(0.898);">0.00SAR</span>
<span class="t" style="top:432.6px;font-size:10px;color:#9a9a9a;right:2150.0px;direction:rtl;word-spacing:.12em;transform-origin:100% 50%;transform:scaleX(0.729);">النقر</span>
<span class="t" style="top:419.7px;font-size:12px;color:#3c3c3c;font-weight:700;left:92.9px;direction:ltr;transform-origin:0 50%;transform:scaleX(0.915);">0.00%</span>
<span class="t" style="top:432.6px;font-size:10px;color:#9a9a9a;right:2276.0px;direction:rtl;word-spacing:.12em;transform-origin:100% 50%;transform:scaleX(0.729);">النقر</span>
<span class="t" style="top:481.0px;font-size:12px;color:#3c3c3c;font-weight:700;left:2130.0px;direction:ltr;transform-origin:0 50%;transform:scaleX(0.986);">22:54:45 2025-27-0</span>
<span class="t" style="top:468.8px;font-size:12px;color:#3c3c3c;font-weight:700;right:393.0px;direction:rtl;word-spacing:.12em;transform-origin:100% 50%;transform:scaleX(0.892);">مُتوقّف(ة) مُؤقّتًا</span>
<span class="t" style="top:482.5px;font-size:10.4px;color:#9a9a9a;right:376.0px;direction:rtl;word-spacing:.12em;transform-origin:100% 50%;transform:scaleX(0.839);">تمّ إيقاف المجموعة الإعلا...</span>
<span class="t" style="top:469.7px;font-size:12px;color:#3c3c3c;font-weight:700;left:1801.0px;direction:ltr;transform-origin:0 50%;transform:scaleX(0.914);">1830586832237602</span>
<span class="t" style="top:468.8px;font-size:12px;color:#5aa3a3;font-weight:700;right:626.0px;direction:rtl;word-spacing:.12em;transform-origin:100% 50%;transform:scaleX(0.887);">مجموعة إعلانية 2704105445...</span>
<span class="t" style="top:469.7px;font-size:12px;color:#3c3c3c;font-weight:700;left:1523.0px;direction:ltr;transform-origin:0 50%;transform:scaleX(0.943);">1830586874229810</span>
<span class="t" style="top:469.6px;font-size:12px;color:#3c3c3c;font-weight:700;left:1452.9px;direction:ltr;transform-origin:0 50%;transform:scaleX(0.906);">SAR 0.28</span>
<span class="t" style="top:469.7px;font-size:12px;color:#3c3c3c;font-weight:700;left:1326.9px;direction:ltr;transform-origin:0 50%;transform:scaleX(0.906);">SAR 0.09</span>
<span class="t" style="top:469.8px;font-size:12px;color:#3c3c3c;font-weight:700;left:1202.9px;direction:ltr;transform-origin:0 50%;transform:scaleX(0.906);">SAR 0.37</span>
<span class="t" style="top:469.8px;font-size:12px;color:#3c3c3c;font-weight:700;left:1105.5px;direction:ltr;transform-origin:0 50%;transform:scaleX(0.925);">751</span>
<span class="t" style="top:469.6px;font-size:12px;color:#3c3c3c;font-weight:700;left:993.8px;direction:ltr;transform-origin:0 50%;transform:scaleX(0.951);">3</span>
<span class="t" style="top:469.6px;font-size:12px;color:#3c3c3c;font-weight:700;left:842.9px;direction:ltr;transform-origin:0 50%;transform:scaleX(0.915);">0.40%</span>
<span class="t" style="top:469.8px;font-size:12px;color:#3c3c3c;font-weight:700;left:741.8px;direction:ltr;transform-origin:0 50%;transform:scaleX(1.134);">0</span>
<span class="t" style="top:469.7px;font-size:12px;color:#3c3c3c;font-weight:700;left:576.5px;direction:ltr;transform-origin:0 50%;transform:scaleX(0.912);">SAR 0.00</span>
<span class="t" style="top:469.7px;font-size:12px;color:#3c3c3c;font-weight:700;left:465.0px;direction:ltr;transform-origin:0 50%;transform:scaleX(0.982);">0.00%</span>
<span class="t" style="top:469.6px;font-size:12px;color:#3c3c3c;font-weight:700;left:368.3px;direction:ltr;transform-origin:0 50%;transform:scaleX(0.951);">3</span>
<span class="t" style="top:482.6px;font-size:10px;color:#9a9a9a;right:2025.5px;direction:rtl;word-spacing:.12em;transform-origin:100% 50%;transform:scaleX(0.729);">النقر</span>
<span class="t" style="top:469.7px;font-size:12px;color:#3c3c3c;font-weight:700;left:206.5px;direction:ltr;transform-origin:0 50%;transform:scaleX(0.898);">0.09SAR</span>
<span class="t" style="top:482.6px;font-size:10px;color:#9a9a9a;right:2150.0px;direction:rtl;word-spacing:.12em;transform-origin:100% 50%;transform:scaleX(0.729);">النقر</span>
<span class="t" style="top:469.6px;font-size:12px;color:#3c3c3c;font-weight:700;left:92.9px;direction:ltr;transform-origin:0 50%;transform:scaleX(0.915);">0.40%</span>
<span class="t" style="top:482.6px;font-size:10px;color:#9a9a9a;right:2276.0px;direction:rtl;word-spacing:.12em;transform-origin:100% 50%;transform:scaleX(0.729);">النقر</span>
<span class="t" style="top:531.0px;font-size:12px;color:#3c3c3c;font-weight:700;left:2130.0px;direction:ltr;transform-origin:0 50%;transform:scaleX(0.986);">22:54:45 2025-27-0</span>
<span class="t" style="top:518.8px;font-size:12px;color:#3c3c3c;font-weight:700;right:393.0px;direction:rtl;word-spacing:.12em;transform-origin:100% 50%;transform:scaleX(0.892);">مُتوقّف(ة) مُؤقّتًا</span>
<span class="t" style="top:532.5px;font-size:10.4px;color:#9a9a9a;right:376.0px;direction:rtl;word-spacing:.12em;transform-origin:100% 50%;transform:scaleX(0.839);">تمّ إيقاف المجموعة الإعلا...</span>
<span class="t" style="top:519.7px;font-size:12px;color:#3c3c3c;font-weight:700;left:1801.0px;direction:ltr;transform-origin:0 50%;transform:scaleX(0.914);">1830586832237602</span>
<span class="t" style="top:518.8px;font-size:12px;color:#5aa3a3;font-weight:700;right:626.0px;direction:rtl;word-spacing:.12em;transform-origin:100% 50%;transform:scaleX(0.887);">مجموعة إعلانية 2704105445...</span>
<span class="t" style="top:519.7px;font-size:12px;color:#3c3c3c;font-weight:700;left:1523.0px;direction:ltr;transform-origin:0 50%;transform:scaleX(0.943);">1830586874236946</span>
<span class="t" style="top:519.7px;font-size:12px;color:#3c3c3c;font-weight:700;left:1452.9px;direction:ltr;transform-origin:0 50%;transform:scaleX(0.906);">SAR 0.00</span>
<span class="t" style="top:519.7px;font-size:12px;color:#3c3c3c;font-weight:700;left:1326.9px;direction:ltr;transform-origin:0 50%;transform:scaleX(0.906);">SAR 0.00</span>
<span class="t" style="top:519.7px;font-size:12px;color:#3c3c3c;font-weight:700;left:1202.9px;direction:ltr;transform-origin:0 50%;transform:scaleX(0.906);">SAR 0.00</span>
<span class="t" style="top:519.7px;font-size:12px;color:#3c3c3c;font-weight:700;left:1105.5px;direction:ltr;transform-origin:0 50%;transform:scaleX(0.925);">588</span>
<span class="t" style="top:519.8px;font-size:12px;color:#3c3c3c;font-weight:700;left:993.8px;direction:ltr;transform-origin:0 50%;transform:scaleX(1.030);">0</span>
<span class="t" style="top:519.7px;font-size:12px;color:#3c3c3c;font-weight:700;left:842.9px;direction:ltr;transform-origin:0 50%;transform:scaleX(0.915);">0.00%</span>
<span class="t" style="top:519.8px;font-size:12px;color:#3c3c3c;font-weight:700;left:741.8px;direction:ltr;transform-origin:0 50%;transform:scaleX(1.134);">0</span>
<span class="t" style="top:519.7px;font-size:12px;color:#3c3c3c;font-weight:700;left:576.5px;direction:ltr;transform-origin:0 50%;transform:scaleX(0.912);">SAR 0.00</span>
<span class="t" style="top:519.7px;font-size:12px;color:#3c3c3c;font-weight:700;left:465.0px;direction:ltr;transform-origin:0 50%;transform:scaleX(0.982);">0.00%</span>
<span class="t" style="top:519.8px;font-size:12px;color:#3c3c3c;font-weight:700;left:368.3px;direction:ltr;transform-origin:0 50%;transform:scaleX(1.030);">0</span>
<span class="t" style="top:532.6px;font-size:10px;color:#9a9a9a;right:2025.5px;direction:rtl;word-spacing:.12em;transform-origin:100% 50%;transform:scaleX(0.729);">النقر</span>
<span class="t" style="top:519.7px;font-size:12px;color:#3c3c3c;font-weight:700;left:206.5px;direction:ltr;transform-origin:0 50%;transform:scaleX(0.898);">0.00SAR</span>
<span class="t" style="top:532.6px;font-size:10px;color:#9a9a9a;right:2150.0px;direction:rtl;word-spacing:.12em;transform-origin:100% 50%;transform:scaleX(0.729);">النقر</span>
<span class="t" style="top:519.7px;font-size:12px;color:#3c3c3c;font-weight:700;left:92.9px;direction:ltr;transform-origin:0 50%;transform:scaleX(0.915);">0.00%</span>
<span class="t" style="top:532.6px;font-size:10px;color:#9a9a9a;right:2276.0px;direction:rtl;word-spacing:.12em;transform-origin:100% 50%;transform:scaleX(0.729);">النقر</span>
</div>
</body></html>
